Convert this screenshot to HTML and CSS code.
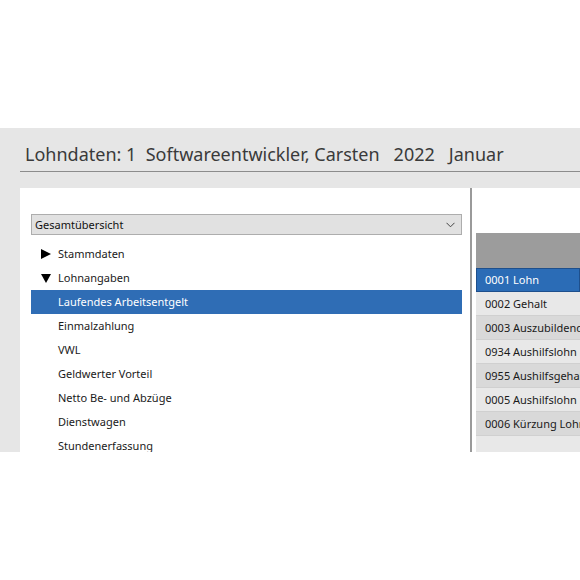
FILE: index.html
```html
<!DOCTYPE html>
<html lang="de">
<head>
<meta charset="utf-8">
<title>Lohndaten</title>
<link rel="stylesheet" href="styles.css">
</head>
<body>
<div class="app">
  <div class="header">
    <h1 class="title">Lohndaten: 1&nbsp; Softwareentwickler, Carsten&nbsp;&nbsp; 2022&nbsp;&nbsp; Januar</h1>
  </div>
  <div class="content">
    <div class="left">
      <div class="select">
        <span>Gesamtübersicht</span>
        <svg class="chev" width="9" height="6" viewBox="0 0 9 6"><path d="M0.5 0.8 L4.5 4.8 L8.5 0.8" fill="none" stroke="#444" stroke-width="1"/></svg>
      </div>
      <ul class="tree">
        <li class="node"><svg class="tri" width="10" height="10" viewBox="0 0 10 10"><polygon points="0,0 10,5 0,10" fill="#000"/></svg>Stammdaten</li>
        <li class="node"><svg class="tri" width="10" height="10" viewBox="0 0 10 10"><polygon points="0,1 10,1 5,10" fill="#000"/></svg>Lohnangaben</li>
        <li class="item selected">Laufendes Arbeitsentgelt</li>
        <li class="item">Einmalzahlung</li>
        <li class="item">VWL</li>
        <li class="item">Geldwerter Vorteil</li>
        <li class="item">Netto Be- und Abzüge</li>
        <li class="item">Dienstwagen</li>
        <li class="item">Stundenerfassung</li>
      </ul>
    </div>
    <div class="divider"></div>
    <div class="right">
      <div class="table">
        <div class="thead"></div>
        <div class="row sel">0001 Lohn</div>
        <div class="row light">0002 Gehalt</div>
        <div class="row dark">0003 Auszubildende</div>
        <div class="row light">0934 Aushilfslohn</div>
        <div class="row dark">0955 Aushilfsgehalt</div>
        <div class="row light">0005 Aushilfslohn</div>
        <div class="row dark">0006 Kürzung Lohn</div>
        <div class="row light"></div>
      </div>
    </div>
  </div>
</div>
</body>
</html>
```

FILE: styles.css
```css
html, body {
  margin: 0;
  padding: 0;
  background: #ffffff;
}
body {
  font-family: "Noto Sans", "Open Sans", "DejaVu Sans", sans-serif;
  color: #222;
}
.app {
  margin-top: 128px;
  height: 324px;
  background: #e6e6e6;
  overflow: hidden;
  display: flex;
  flex-direction: column;
}
.header {
  margin-left: 20px;
  height: 44px;
  border-bottom: 1px solid #8c8c8c;
  box-sizing: border-box;
  display: flex;
  align-items: flex-end;
}
.title {
  margin: 0 0 5px 5px;
  font-weight: 400;
  font-size: 18px;
  line-height: 24px;
  color: #3a3a3a;
  white-space: nowrap;
}
.content {
  margin-top: 16px;
  margin-left: 20px;
  flex: 1;
  display: flex;
  min-height: 0;
}
.left {
  width: 450px;
  background: #fff;
  padding: 26px 8px 0 11px;
  box-sizing: border-box;
}
.select {
  height: 21px;
  background: #e1e1e1;
  border: 1px solid #adadad;
  box-sizing: border-box;
  display: flex;
  align-items: center;
  justify-content: space-between;
  padding: 0 6px 0 3px;
  font-size: 11px;
  color: #111;
}
.chev { display: block; }
.tree {
  list-style: none;
  margin: 7px 0 0 0;
  padding: 0;
}
.tree li {
  height: 24px;
  line-height: 24px;
  font-size: 11px;
  color: #1a1a1a;
  white-space: nowrap;
}
.node {
  display: flex;
  align-items: center;
  padding-left: 10px;
}
.tri {
  display: block;
  margin-right: 7px;
}
.item {
  padding-left: 27px;
}
.item.selected {
  background: #2f6db5;
  color: #fff;
}
.divider {
  width: 2px;
  background: #9a9a9a;
}
.right {
  flex: 1;
  background: #fff;
  padding: 45px 0 0 4px;
  overflow: hidden;
}
.thead {
  height: 35px;
  background: #9c9c9c;
}
.row {
  height: 24px;
  line-height: 24px;
  box-sizing: border-box;
  padding-left: 9px;
  font-size: 11px;
  color: #1a1a1a;
  white-space: nowrap;
  border-bottom: 1px solid #d0d0d0;
}
.row.light { background: #e8e8e8; }
.row.dark { background: #d9d9d9; }
.row.sel {
  background: #2b6cb6;
  color: #fff;
  border: 1px solid #1e4f8c;
  padding-left: 8px;
  line-height: 22px;
}
```
